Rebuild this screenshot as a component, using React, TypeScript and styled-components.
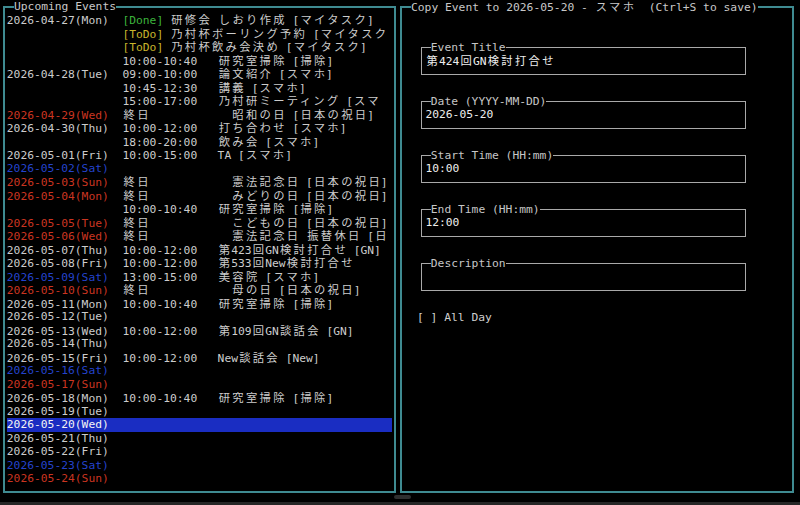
import React from 'react';
import styled, { createGlobalStyle } from 'styled-components';

type Tone = 'weekday' | 'sat' | 'holiday';
type Status = 'Done' | 'ToDo';

interface EventLine {
  date?: string;
  tone?: Tone;
  selected?: boolean;
  status?: Status;
  time?: string;
  allDay?: boolean;
  title?: string;
}

const GlobalStyle = createGlobalStyle`
  html, body {
    margin: 0;
    padding: 0;
    background: #000;
  }
  body {
    width: 800px;
    height: 505px;
    overflow: hidden;
  }
`;

const toneColors: Record<Tone, string> = {
  weekday: '#cccccc',
  sat: '#2443cc',
  holiday: '#cb3520',
};

const statusColors: Record<Status, string> = {
  Done: '#3cb43c',
  ToDo: '#c8b52c',
};

const Screen = styled.div`
  width: 800px;
  height: 505px;
  background: #000;
  color: #cccccc;
  font-family: 'DejaVu Sans Mono', 'Noto Sans CJK JP', monospace;
  font-size: 11.3px;
  line-height: 13.5px;
  display: flex;
  flex-direction: column;
`;

const Panes = styled.div`
  display: flex;
  gap: 4px;
  padding: 6px 0 0 3px;
`;

const Panel = styled.section<{ $width: number }>`
  position: relative;
  box-sizing: border-box;
  flex: none;
  width: ${p => p.$width}px;
  height: 487px;
  border: 2px solid #3f8b91;
`;

const PanelTitle = styled.div`
  position: absolute;
  top: -7.75px;
  left: 9px;
  width: max-content;
  height: 13.5px;
  background: #000;
  color: #c8c8c8;
  white-space: pre;
`;

const EventList = styled.div`
  display: flex;
  flex-direction: column;
  padding: 5.25px 2.3px 0 1.8px;
`;

const EventRow = styled.div<{ $selected?: boolean }>`
  height: 13.5px;
  white-space: pre;
  background: ${p => (p.$selected ? '#1a2dc2' : 'transparent')};
  color: ${p => (p.$selected ? '#f4f4f4' : '#cccccc')};
`;

const DateCell = styled.span<{ $tone: Tone; $selected?: boolean }>`
  display: inline-block;
  width: 17ch;
  color: ${p => (p.$selected ? '#f4f4f4' : toneColors[p.$tone])};
`;

const TimeCell = styled.span<{ $allDay?: boolean }>`
  display: inline-block;
  width: ${p => (p.$allDay ? 16 : 14)}ch;
`;

const StatusTag = styled.span<{ $status: Status }>`
  color: ${p => statusColors[p.$status]};
`;

// a full-width glyph sits in the middle of its two cells
const Wide = styled.span`
  font-family: 'Noto Sans CJK JP', sans-serif;
  line-height: 13.5px;
  letter-spacing: 0.204em;
  padding-left: 0.102em;
  margin-right: -0.102em;
`;

const FormBody = styled.div`
  display: flex;
  flex-direction: column;
  align-items: flex-start;
  padding: 38.75px 0 0 15px;
`;

const Field = styled.div`
  position: relative;
  box-sizing: border-box;
  width: 324.5px;
  height: 28px;
  margin: 0 0 26px 4.4px;
  padding: 6.25px 3px;
  border: 1px solid #a9a9a9;
`;

const FieldLabel = styled.span`
  position: absolute;
  top: -7.25px;
  left: 8.4px;
  background: #000;
  color: #c6c6c6;
  white-space: pre;
`;

const FieldValue = styled.div`
  height: 13.5px;
  color: #ededed;
  white-space: pre;
`;

const CheckRow = styled.div`
  margin-top: -6.25px;
  color: #cfcfcf;
  white-space: pre;
`;

const Footer = styled.div`
  flex: 1;
  display: flex;
  flex-direction: column;
`;

const Handle = styled.div`
  width: 17px;
  height: 4px;
  margin: 2px 0 0 394px;
  border-radius: 2px;
  background: #2f2f2f;
`;

const BottomStrip = styled.div`
  margin-top: auto;
  height: 3px;
  background: #262626;
`;

const WIDE_RUN = /([\u2E80-\u9FFF\uF900-\uFAFF\uFF00-\uFF60\uFFE0-\uFFE6]+)/;

// terminal text: full-width characters take two cells
const TermText: React.FC<{ text: string }> = ({ text }) => (
  <>
    {text
      .split(WIDE_RUN)
      .filter(Boolean)
      .map((part, i) =>
        WIDE_RUN.test(part) ? <Wide key={i}>{part}</Wide> : <React.Fragment key={i}>{part}</React.Fragment>
      )}
  </>
);

const events: EventLine[] = [
  { date: '2026-04-27(Mon)', status: 'Done', title: '研修会 しおり作成 [マイタスク]' },
  { status: 'ToDo', title: '乃村杯ボーリング予約 [マイタスク' },
  { status: 'ToDo', title: '乃村杯飲み会決め [マイタスク]' },
  { time: '10:00-10:40', title: '研究室掃除 [掃除]' },
  { date: '2026-04-28(Tue)', time: '09:00-10:00', title: '論文紹介 [スマホ]' },
  { time: '10:45-12:30', title: '講義 [スマホ]' },
  { time: '15:00-17:00', title: '乃村研ミーティング [スマ' },
  { date: '2026-04-29(Wed)', tone: 'holiday', time: '終日', allDay: true, title: '昭和の日 [日本の祝日]' },
  { date: '2026-04-30(Thu)', time: '10:00-12:00', title: '打ち合わせ [スマホ]' },
  { time: '18:00-20:00', title: '飲み会 [スマホ]' },
  { date: '2026-05-01(Fri)', time: '10:00-15:00', title: 'TA [スマホ]' },
  { date: '2026-05-02(Sat)', tone: 'sat' },
  { date: '2026-05-03(Sun)', tone: 'holiday', time: '終日', allDay: true, title: '憲法記念日 [日本の祝日]' },
  { date: '2026-05-04(Mon)', tone: 'holiday', time: '終日', allDay: true, title: 'みどりの日 [日本の祝日]' },
  { time: '10:00-10:40', title: '研究室掃除 [掃除]' },
  { date: '2026-05-05(Tue)', tone: 'holiday', time: '終日', allDay: true, title: 'こどもの日 [日本の祝日]' },
  { date: '2026-05-06(Wed)', tone: 'holiday', time: '終日', allDay: true, title: '憲法記念日 振替休日 [日' },
  { date: '2026-05-07(Thu)', time: '10:00-12:00', title: '第423回GN検討打合せ [GN]' },
  { date: '2026-05-08(Fri)', time: '10:00-12:00', title: '第533回New検討打合せ' },
  { date: '2026-05-09(Sat)', tone: 'sat', time: '13:00-15:00', title: '美容院 [スマホ]' },
  { date: '2026-05-10(Sun)', tone: 'holiday', time: '終日', allDay: true, title: '母の日 [日本の祝日]' },
  { date: '2026-05-11(Mon)', time: '10:00-10:40', title: '研究室掃除 [掃除]' },
  { date: '2026-05-12(Tue)' },
  { date: '2026-05-13(Wed)', time: '10:00-12:00', title: '第109回GN談話会 [GN]' },
  { date: '2026-05-14(Thu)' },
  { date: '2026-05-15(Fri)', time: '10:00-12:00', title: 'New談話会 [New]' },
  { date: '2026-05-16(Sat)', tone: 'sat' },
  { date: '2026-05-17(Sun)', tone: 'holiday' },
  { date: '2026-05-18(Mon)', time: '10:00-10:40', title: '研究室掃除 [掃除]' },
  { date: '2026-05-19(Tue)' },
  { date: '2026-05-20(Wed)', selected: true },
  { date: '2026-05-21(Thu)' },
  { date: '2026-05-22(Fri)' },
  { date: '2026-05-23(Sat)', tone: 'sat' },
  { date: '2026-05-24(Sun)', tone: 'holiday' },
];

const fields = [
  { label: 'Event Title', value: '第424回GN検討打合せ' },
  { label: 'Date (YYYY-MM-DD)', value: '2026-05-20' },
  { label: 'Start Time (HH:mm)', value: '10:00' },
  { label: 'End Time (HH:mm)', value: '12:00' },
  { label: 'Description', value: '' },
];

const EventLineRow: React.FC<{ line: EventLine }> = ({ line }) => (
  <EventRow $selected={line.selected}>
    <DateCell $tone={line.tone ?? 'weekday'} $selected={line.selected}>
      {line.date ?? ''}
    </DateCell>
    {line.status && (
      <>
        <StatusTag $status={line.status}>[{line.status}]</StatusTag>{' '}
      </>
    )}
    {line.time && (
      <TimeCell $allDay={line.allDay}>
        <TermText text={line.time} />
      </TimeCell>
    )}
    {line.title && <TermText text={line.title} />}
  </EventRow>
);

const App: React.FC = () => {
  return (
    <Screen>
      <GlobalStyle />
      <Panes>
        <Panel $width={393}>
          <PanelTitle>Upcoming Events</PanelTitle>
          <EventList>
            {events.map((line, i) => (
              <EventLineRow key={i} line={line} />
            ))}
          </EventList>
        </Panel>
        <Panel $width={394}>
          <PanelTitle>
            <TermText text="Copy Event to 2026-05-20 - スマホ  (Ctrl+S to save)" />
          </PanelTitle>
          <FormBody>
            {fields.map(f => (
              <Field key={f.label}>
                <FieldLabel>{f.label}</FieldLabel>
                <FieldValue>
                  <TermText text={f.value} />
                </FieldValue>
              </Field>
            ))}
            <CheckRow>[ ] All Day</CheckRow>
          </FormBody>
        </Panel>
      </Panes>
      <Footer>
        <Handle />
        <BottomStrip />
      </Footer>
    </Screen>
  );
};

export default App;
